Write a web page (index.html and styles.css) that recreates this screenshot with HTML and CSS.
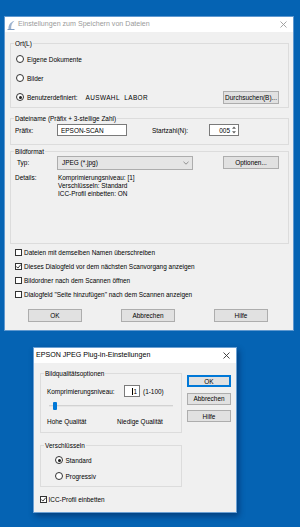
FILE: index.html
```html
<!DOCTYPE html>
<html lang="de">
<head>
<meta charset="utf-8">
<title>Einstellungen zum Speichern von Dateien</title>
<link rel="stylesheet" href="styles.css">
</head>
<body>
<main class="desktop">
  <section class="win win-save">
    <header class="titlebar is-inactive">
      <svg class="appicon" width="8" height="10" viewBox="0 0 8 10"><path d="M1.5 9 C1.2 5.5 3 2.2 7.5 0.8 C5 3 4 5.5 4.2 9 Z" fill="#9db3cf"/><path d="M0.5 9.5 H7.5" stroke="#7d9cc2" stroke-width="1"/></svg>
      <span class="title">Einstellungen zum Speichern von Dateien</span>
      <svg class="close" width="7" height="7" viewBox="0 0 7 7"><path d="M0.5 0.5 L6.5 6.5 M6.5 0.5 L0.5 6.5"/></svg>
    </header>
    <div class="client">
      <fieldset class="group g-ort">
        <legend>Ort(L)</legend>
        <div class="opt-row"><span class="radio"></span><span>Eigene Dokumente</span></div>
        <div class="opt-row"><span class="radio"></span><span>Bilder</span></div>
        <div class="opt-row"><span class="radio is-on"></span><span>Benutzerdefiniert:</span><span class="custom-path">AUSWAHL&nbsp; LABOR</span><button class="btn btn-side">Durchsuchen(B)...</button></div>
      </fieldset>
      <fieldset class="group g-name">
        <legend>Dateiname (Präfix + 3-stellige Zahl)</legend>
        <div class="field-row">
          <span class="lbl lbl-prefix">Präfix:</span>
          <span class="textbox tb-prefix">EPSON-SCAN</span>
          <span class="lbl lbl-start">Startzahl(N):</span>
          <span class="spin"><span class="spin-val">005</span><svg class="spin-btns" width="6" height="10" viewBox="0 0 6 10"><path d="M3 1.5 L5 3.8 H1 Z M3 8.5 L5 6.2 H1 Z" fill="#606060"/></svg></span>
        </div>
      </fieldset>
      <fieldset class="group g-format">
        <legend>Bildformat</legend>
        <div class="field-row row-type">
          <span class="lbl lbl-type">Typ:</span>
          <span class="combo"><span>JPEG (*.jpg)</span><svg class="chev" width="6" height="4" viewBox="0 0 6 4"><path d="M0.5 0.8 L3 3.2 L5.5 0.8" fill="none" stroke="#7a7a7a" stroke-width="0.8"/></svg></span>
          <button class="btn btn-side">Optionen...</button>
        </div>
        <div class="details">
          <span class="lbl lbl-details">Details:</span>
          <div class="details-text">
            <div>Komprimierungsniveau: [1]</div>
            <div>Verschlüsseln: Standard</div>
            <div>ICC-Profil einbetten: ON</div>
          </div>
        </div>
      </fieldset>
      <ul class="checks">
        <li><span class="check"></span>Dateien mit demselben Namen überschreiben</li>
        <li><span class="check"><svg viewBox="0 0 7 7" width="7" height="7"><path d="M1.2 3.4 L2.9 5.1 L5.9 1.6" fill="none" stroke="#222" stroke-width="0.9"/></svg></span>Dieses Dialogfeld vor dem nächsten Scanvorgang anzeigen</li>
        <li><span class="check"></span>Bildordner nach dem Scannen öffnen</li>
        <li><span class="check"></span>Dialogfeld "Seite hinzufügen" nach dem Scannen anzeigen</li>
      </ul>
      <div class="actions">
        <button class="btn btn-act">OK</button>
        <button class="btn btn-act">Abbrechen</button>
        <button class="btn btn-act">Hilfe</button>
      </div>
    </div>
  </section>

  <section class="win win-jpeg">
    <header class="titlebar is-active">
      <span class="title">EPSON JPEG Plug-in-Einstellungen</span>
      <svg class="close" width="7" height="7" viewBox="0 0 7 7"><path d="M0.5 0.5 L6.5 6.5 M6.5 0.5 L0.5 6.5"/></svg>
    </header>
    <div class="client client-jpeg">
      <div class="jpeg-main">
        <fieldset class="group g-quality">
          <legend>Bildqualitätsoptionen</legend>
          <div class="q-row">
            <span class="q-label">Komprimierungsniveau:</span>
            <span class="q-input"><span class="caret"></span>1</span>
            <span class="q-range">(1-100)</span>
          </div>
          <div class="slider">
            <span class="track"></span>
            <span class="thumb"></span>
          </div>
          <div class="q-scale"><span class="q-high">Hohe Qualität</span><span>Niedige Qualität</span></div>
        </fieldset>
        <fieldset class="group g-encode">
          <legend>Verschlüsseln</legend>
          <div class="enc-row"><span class="radio is-on"></span><span>Standard</span></div>
          <div class="enc-row"><span class="radio"></span><span>Progressiv</span></div>
        </fieldset>
        <div class="icc"><span class="check"><svg viewBox="0 0 7 7" width="7" height="7"><path d="M1.2 3.4 L2.9 5.1 L5.9 1.6" fill="none" stroke="#222" stroke-width="0.9"/></svg></span>ICC-Profil einbetten</div>
      </div>
      <div class="jpeg-actions">
        <button class="btn btn-v btn-default">OK</button>
        <button class="btn btn-v">Abbrechen</button>
        <button class="btn btn-v">Hilfe</button>
      </div>
    </div>
  </section>
</main>
</body>
</html>
```
FILE: styles.css
```css
* { box-sizing: border-box; margin: 0; padding: 0; }
html, body { width: 300px; height: 527px; overflow: hidden; }
body {
  background: #0563b3;
  font-family: "Liberation Sans", Arial, sans-serif;
  font-size: 6.45px;
  line-height: 9px;
  color: #000;
}
.desktop { position: relative; width: 300px; height: 527px; }

.win {
  position: absolute;
  display: flex;
  flex-direction: column;
  background: #f0f0f0;
}
.win-save {
  left: 4px; top: 16px;
  width: 290px; height: 315px;
  border: 1px solid #5f98cf;
}
.win-jpeg {
  left: 33px; top: 347px;
  width: 204px; height: 166px;
  border: 1px solid #6aa0d4;
  box-shadow: 2px 3px 6px rgba(0, 20, 60, 0.45);
}

.titlebar {
  flex: none;
  height: 15px;
  background: #fff;
  display: flex;
  align-items: center;
  padding: 0 6px 0 2px;
  font-size: 7.1px;
}
.appicon { flex: none; margin-right: 3px; }
.title { flex: 1; white-space: nowrap; }
.is-inactive .title { color: #9a9a9a; }
.is-active .title { color: #000; }
.close { flex: none; fill: none; stroke-width: 0.9; }
.is-inactive .close { stroke: #9a9a9a; }
.is-active .close { stroke: #333; }

.client {
  flex: 1;
  display: flex;
  flex-direction: column;
  padding: 0 4px 0 5px;
}

.group {
  border: 1px solid #dcdcdc;
  padding: 0 9px 0 4px;
  min-width: 0;
}
legend { padding: 0 1px; margin-left: -1px; line-height: 9px; }

.g-ort { margin-top: 6.5px; padding-top: 2px; }
.opt-row { display: flex; align-items: center; height: 19px; white-space: nowrap; }
.radio {
  flex: none;
  position: relative;
  width: 8px; height: 8px;
  border: 1px solid #333;
  border-radius: 50%;
  background: #fff;
  margin: 0 3px 0 1px;
}
.radio.is-on::after {
  content: "";
  position: absolute;
  left: 1.5px; top: 1.5px;
  width: 3px; height: 3px;
  border-radius: 50%;
  background: #1e1e1e;
}
.custom-path { margin-left: 8px; letter-spacing: 0.4px; }

.btn {
  font: inherit;
  color: #000;
  background: #e1e1e1;
  border: 1px solid #adadad;
  display: flex;
  align-items: center;
  justify-content: center;
  line-height: 9px;
}
.btn-side { margin-left: auto; width: 56px; height: 13px; flex: none; }

.g-name { margin-top: 6px; padding-bottom: 6px; }
.field-row { display: flex; align-items: center; height: 15px; white-space: nowrap; }
.lbl { flex: none; }
.lbl-prefix { width: 42px; }
.textbox {
  flex: none;
  width: 70px; height: 12px;
  background: #fff;
  border: 1px solid #7a7a7a;
  padding-left: 3px;
  display: flex; align-items: center;
}
.lbl-start { margin-left: 25px; width: 57px; }
.spin {
  flex: none;
  width: 30px; height: 12px;
  background: #fff;
  border: 1px solid #7a7a7a;
  display: flex; align-items: center; justify-content: flex-end;
}
.spin-val { padding-right: 1px; }
.spin-btns { flex: none; margin-right: 1px; }

.g-format { margin-top: 2px; padding-bottom: 45px; }
.row-type { height: 14px; }
.lbl-type { width: 42px; padding-left: 2px; }
.combo {
  flex: none;
  width: 136px; height: 14px;
  background: #e5e5e5;
  border: 1px solid #adadad;
  padding: 0 3px 0 4px;
  display: flex; align-items: center; justify-content: space-between;
}
.details { display: flex; margin-top: 4px; line-height: 8px; }
.lbl-details { width: 43px; }

.checks { list-style: none; margin-top: 2px; }
.checks li { display: flex; align-items: center; height: 14px; padding-left: 5px; white-space: nowrap; }
.check {
  flex: none;
  width: 7px; height: 7px;
  border: 1px solid #333;
  background: #fff;
  margin-right: 2px;
  display: flex; align-items: center; justify-content: center;
}
.check svg { flex: none; }

.actions { display: flex; gap: 39px; padding-left: 18px; margin-top: 7px; }
.btn-act { width: 54px; height: 13px; }

/* JPEG dialog */
.client-jpeg { flex-direction: row; gap: 5px; padding: 0 5px 0 6px; }
.jpeg-main { width: 142px; flex: none; display: flex; flex-direction: column; }
.g-quality { margin-top: 5.5px; padding: 7.5px 4px 5px 6px; }
.g-quality legend, .g-encode legend { margin-left: -3px; }
.q-row { display: flex; align-items: center; height: 12px; white-space: nowrap; }
.q-label { width: 77px; flex: none; }
.q-input {
  flex: none;
  width: 16px; height: 12px;
  background: #fff;
  border: 1px solid #7a7a7a;
  display: flex; align-items: center; justify-content: flex-end;
  padding-right: 2px;
}
.caret { width: 1px; height: 7px; background: #000; margin-right: 0.5px; }
.q-range { margin-left: 3px; }
.slider { position: relative; height: 18px; padding-top: 8px; }
.track {
  display: block;
  margin: 0 4px 0 2px;
  height: 2px;
  background: #e6e6e6;
  border-top: 1px solid #d2d2d2;
}
.thumb {
  position: absolute;
  left: 6px; top: 5px;
  width: 4px; height: 8px;
  border-radius: 1px;
  background: #0078d7;
}
.q-scale { display: flex; align-items: center; height: 12px; white-space: nowrap; }
.q-high { width: 70px; flex: none; }

.g-encode { margin-top: 8px; padding: 2px 6px 2px 6px; }
.enc-row { display: flex; align-items: center; height: 16px; padding-left: 7px; }
.enc-row .radio { margin-right: 2.5px; }

.icc { display: flex; align-items: center; height: 14px; margin-top: 5px; white-space: nowrap; }
.icc .check { margin-right: 1.5px; }

.jpeg-actions { width: 44px; flex: none; display: flex; flex-direction: column; gap: 5.5px; padding-top: 12px; }
.btn-v { width: 44px; height: 12px; }
.btn-default { border-color: #0078d7; box-shadow: inset 0 0 0 1px #0078d7; }
```
